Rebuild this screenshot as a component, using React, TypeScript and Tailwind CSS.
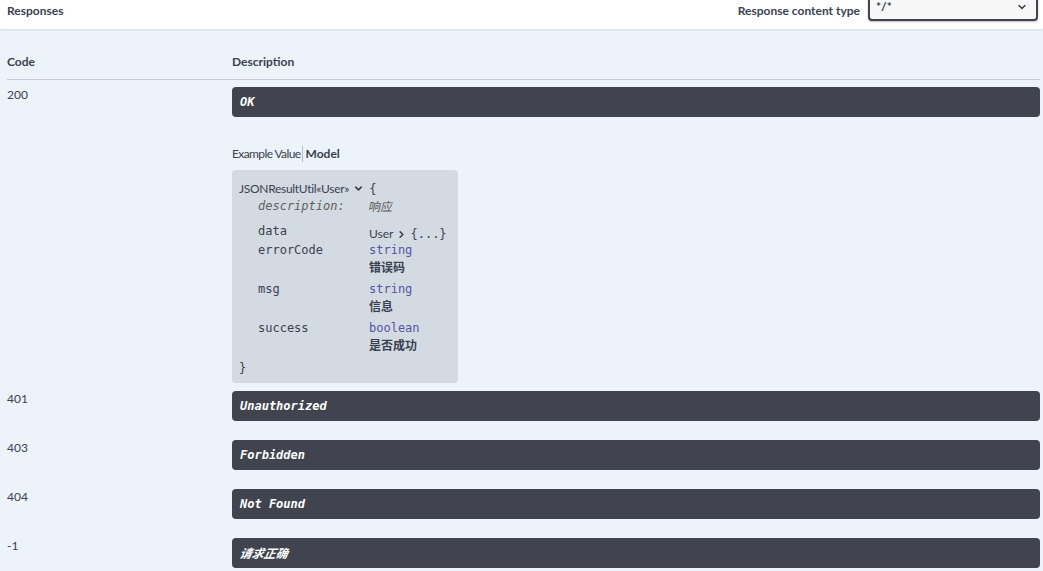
import { ChevronDown, ChevronRight } from "lucide-react";

const SANS = "font-['Lato','Open_Sans',sans-serif]";
const MONO = "font-['DejaVu_Sans_Mono','Noto_Sans_CJK_SC',monospace]";
const CJK = "font-['Noto_Sans_CJK_SC',sans-serif]";

const OTHER = [
  { code: "401", text: "Unauthorized" },
  { code: "403", text: "Forbidden" },
  { code: "404", text: "Not Found" },
  { code: "-1", text: "请求正确", cjk: true },
];

function DescBox({ text, cjk }: { text: string; cjk?: boolean }) {
  return (
    <div className={`flex h-[30px] items-center rounded-[4px] bg-[#41444e] px-[8px] text-[12px] font-bold italic text-white ${MONO}`}>
      {cjk ? <span className={`inline-block -skew-x-12 ${CJK}`}>{text}</span> : text}
    </div>
  );
}

function Prop({ name, type, desc }: { name: string; type: string; desc: string }) {
  return (
    <div className="flex h-[39px] items-start">
      <div className={`w-[111px] text-[12px] leading-[16px] text-[#3b4151] ${MONO}`}>{name}</div>
      <div className="flex flex-col">
        <span className={`text-[12px] leading-[16px] text-[#55a] ${MONO}`}>{type}</span>
        <span className={`text-[12px] font-bold leading-[17px] text-[#3b4151] ${CJK}`}>{desc}</span>
      </div>
    </div>
  );
}

function ModelBox() {
  return (
    <div className="w-[226px] rounded-[4px] bg-[#d4dae1] pb-[7px] pl-[7px] pt-[10px]">
      <div className={`flex h-[17px] items-center text-[12px] text-[#3b4151] ${SANS}`}>
        <span className="tracking-[-0.3px]">JSONResultUtil«User»</span>
        <ChevronDown className="ml-[4px] size-[11px]" strokeWidth={3.5} />
        <span className={`ml-[5px] ${MONO}`}>{"{"}</span>
      </div>
      <div className="pl-[19px]">
        <div className="flex h-[17px] items-center">
          <span className={`w-[111px] text-[12px] italic text-[#606060] ${MONO}`}>description:</span>
          <span className={`inline-block -skew-x-12 text-[12px] text-[#555] ${CJK}`}>响应</span>
        </div>
        <div className="mt-[9px] flex h-[19px] items-start">
          <span className={`w-[111px] text-[12px] leading-[16px] text-[#3b4151] ${MONO}`}>data</span>
          <span className={`mt-[2px] flex items-center text-[12px] text-[#3b4151] ${SANS}`}>
            User
            <ChevronRight className="ml-[3px] size-[11px]" strokeWidth={3.5} />
            <span className={`ml-[3px] ${MONO}`}>{"{...}"}</span>
          </span>
        </div>
        <Prop name="errorCode" type="string" desc="错误码" />
        <Prop name="msg" type="string" desc="信息" />
        <Prop name="success" type="boolean" desc="是否成功" />
      </div>
      <div className={`mt-[1px] h-[16px] text-[12px] leading-[16px] text-[#3b4151] ${MONO}`}>{"}"}</div>
    </div>
  );
}

export default function App() {
  return (
    <div className={`min-h-[571px] w-full bg-[#ecf3fa] text-[#3b4151] ${SANS}`}>
      <div className="flex h-[29px] items-start justify-between bg-white pl-[7px] pr-[5px] pt-[3px] shadow-[0_1px_2px_rgba(0,0,0,0.1)]">
        <span className="text-[12px] font-bold leading-[16px]">Responses</span>
        <div className="flex items-start">
          <span className="mr-[8px] text-[12px] font-bold leading-[16px]">Response content type</span>
          <div className="-mt-[14px] flex h-[32px] w-[170px] items-end justify-between rounded-[4px] border-2 border-[#41444e] bg-[#f7f7f7] pb-[3px] pl-[6px] pr-[8px] shadow-[0_1px_2px_rgba(0,0,0,0.25)]">
            <span className="text-[12px] font-bold">*/*</span>
            <ChevronDown className="mb-[3px] size-[12px]" strokeWidth={3} />
          </div>
        </div>
      </div>

      <div className="pl-[7px] pr-[3px] pt-[25px]">
        <div className="flex border-b border-[#c5ccd5] pb-[10px] text-[12px] font-bold leading-[15px]">
          <div className="w-[225px]">Code</div>
          <div>Description</div>
        </div>

        <div className="flex pb-[1px] pt-[7px]">
          <div className="w-[225px] text-[12px] leading-[16px]">200</div>
          <div className="flex-1">
            <DescBox text="OK" />
            <div className="mt-[29px] flex h-[16px] items-center text-[12px]">
              <span className="tracking-[-0.6px]">Example Value</span>
              <span className="ml-[1px] h-[16px] w-px bg-[#b9bec6]" />
              <span className="ml-[3px] font-bold">Model</span>
            </div>
            <div className="mt-[8px]">
              <ModelBox />
            </div>
          </div>
        </div>

        {OTHER.map((row) => (
          <div key={row.code} className="flex pb-[12px] pt-[7px]">
            <div className="w-[225px] text-[12px] leading-[16px]">{row.code}</div>
            <div className="flex-1">
              <DescBox text={row.text} cjk={row.cjk} />
            </div>
          </div>
        ))}
      </div>
    </div>
  );
}
